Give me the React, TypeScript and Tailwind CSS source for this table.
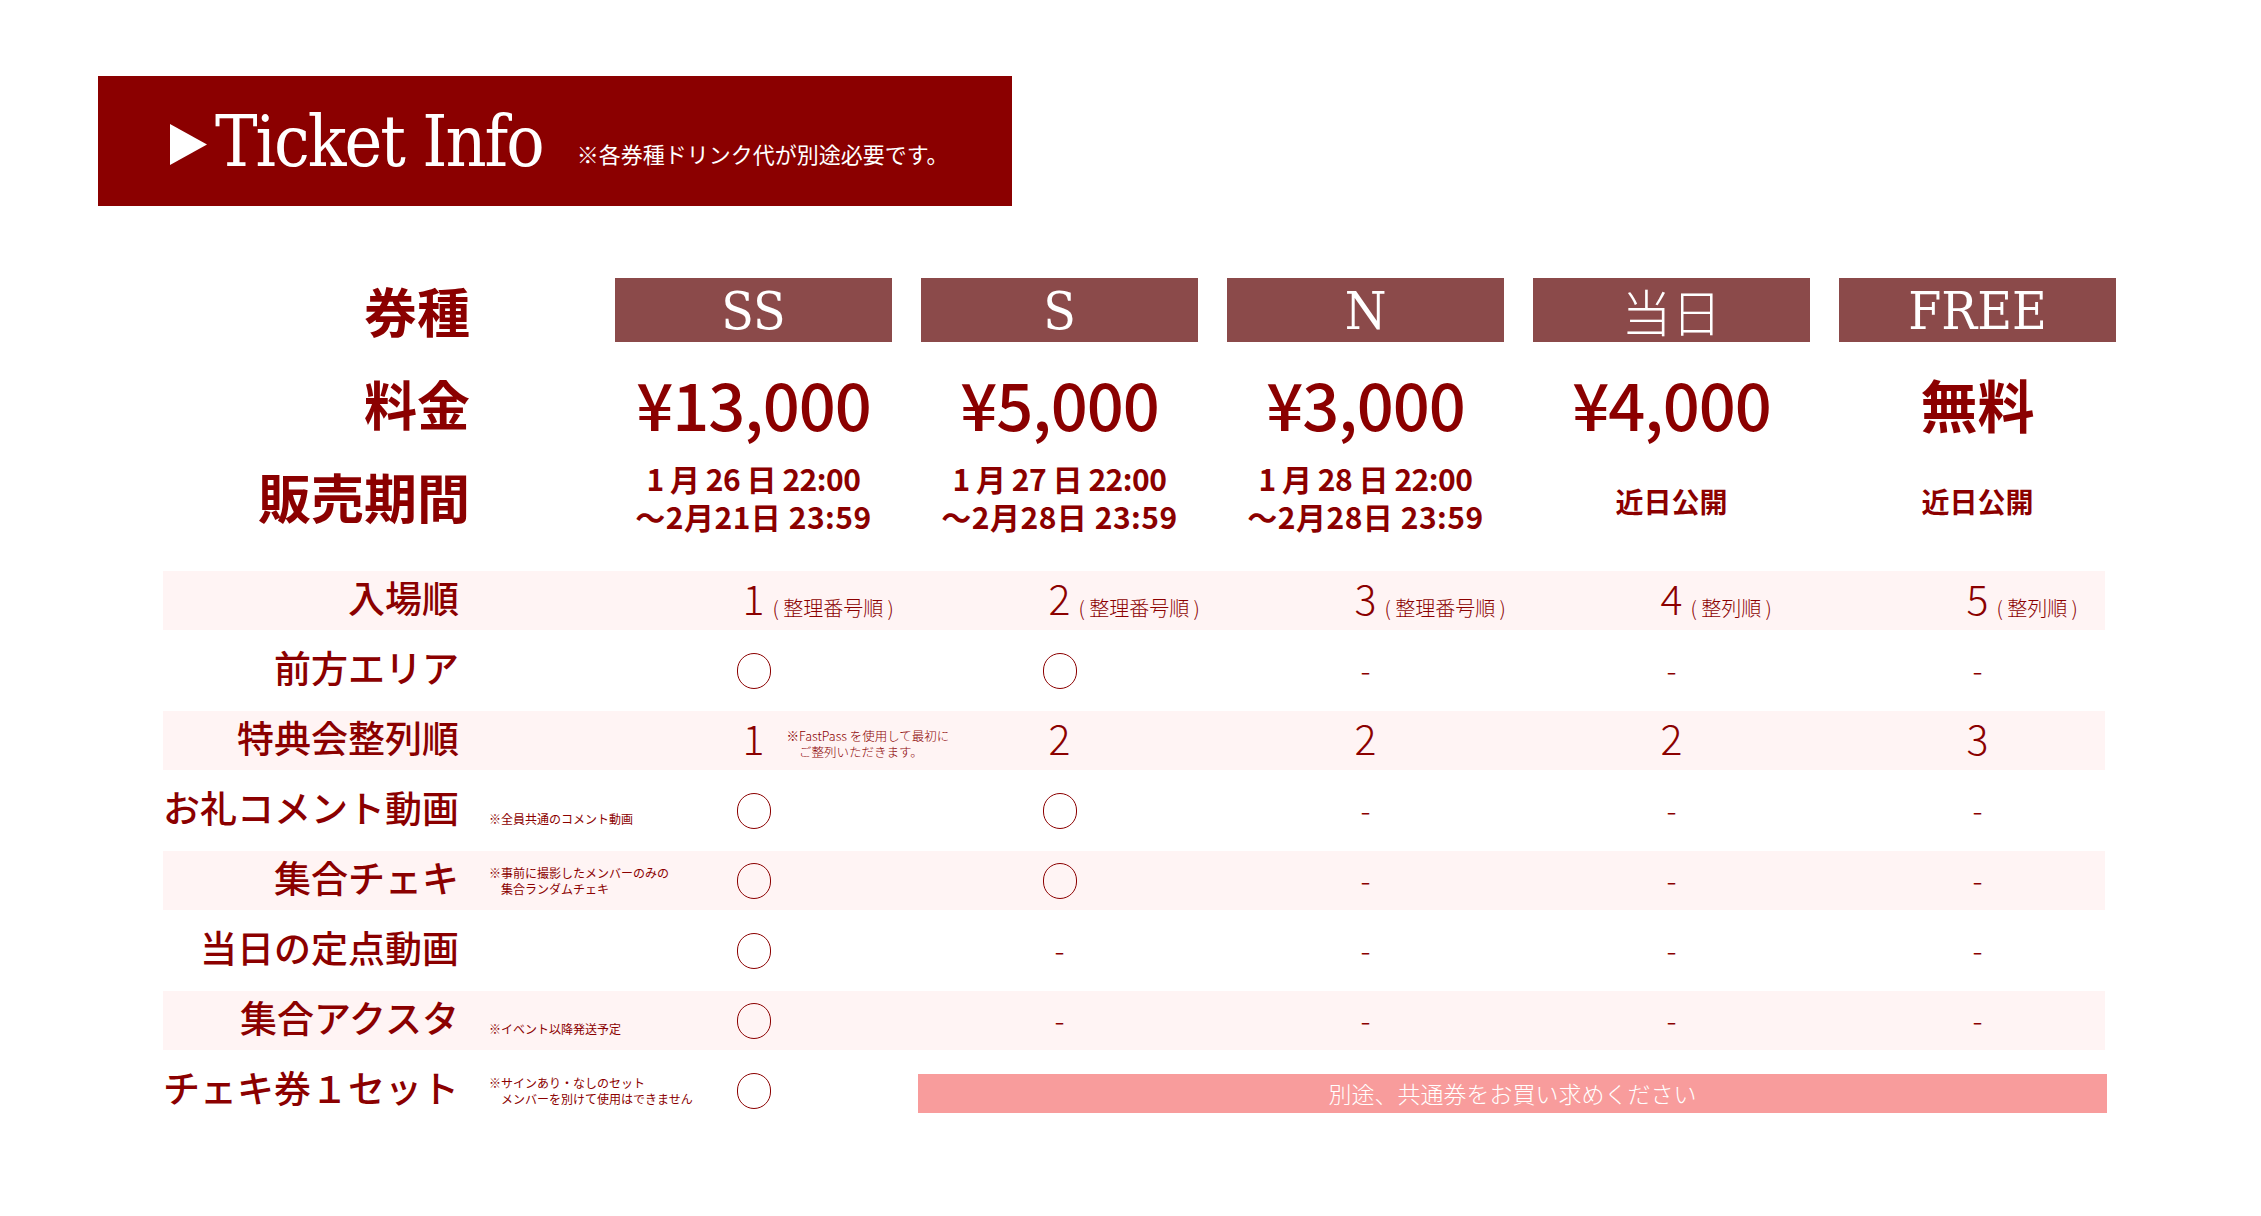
import React from "react";

const jp = "font-['Noto_Sans_CJK_JP','Noto_Sans',sans-serif]";
const slab = "font-['DejaVu_Serif_Condensed','DejaVu_Serif',serif]";

const grid = "grid grid-cols-[423px_repeat(5,277px)] gap-x-[29px]";

type Cell =
  | { t: "num"; v: string; note?: string; small?: string[] }
  | { t: "o" }
  | { t: "-" }
  | { t: "banner" };

type Row = { label: string; note?: string[]; cells: Cell[]; pink: boolean };

const O: Cell = { t: "o" };
const D: Cell = { t: "-" };

const rows: Row[] = [
  {
    label: "入場順",
    pink: true,
    cells: [
      { t: "num", v: "1", note: "( 整理番号順 )" },
      { t: "num", v: "2", note: "( 整理番号順 )" },
      { t: "num", v: "3", note: "( 整理番号順 )" },
      { t: "num", v: "4", note: "( 整列順 )" },
      { t: "num", v: "5", note: "( 整列順 )" },
    ],
  },
  { label: "前方エリア", pink: false, cells: [O, O, D, D, D] },
  {
    label: "特典会整列順",
    pink: true,
    cells: [
      { t: "num", v: "1", small: ["※FastPass を使用して最初に", "　ご整列いただきます。"] },
      { t: "num", v: "2" },
      { t: "num", v: "2" },
      { t: "num", v: "2" },
      { t: "num", v: "3" },
    ],
  },
  { label: "お礼コメント動画", note: ["※全員共通のコメント動画"], pink: false, cells: [O, O, D, D, D] },
  {
    label: "集合チェキ",
    note: ["※事前に撮影したメンバーのみの", "　集合ランダムチェキ"],
    pink: true,
    cells: [O, O, D, D, D],
  },
  { label: "当日の定点動画", pink: false, cells: [O, D, D, D, D] },
  { label: "集合アクスタ", note: ["※イベント以降発送予定"], pink: true, cells: [O, D, D, D, D] },
  {
    label: "チェキ券１セット",
    note: ["※サインあり・なしのセット", "　メンバーを別けて使用はできません"],
    pink: false,
    cells: [O, { t: "banner" }],
  },
];

function CellView({ c }: { c: Cell }) {
  if (c.t === "o")
    return (
      <div className="flex items-center justify-center">
        <div className="w-[34px] h-[36px] rounded-full border-[1.5px] border-[#8b0000]" />
      </div>
    );
  if (c.t === "-")
    return (
      <div className={`flex items-center justify-center text-[#8b0000] text-[30px] leading-none font-light ${jp}`}>
        <span className="mb-[4px]">-</span>
      </div>
    );
  if (c.t === "banner")
    return (
      <div className="col-span-4 flex items-center -ml-[3px] mr-[9px]">
        <div className={`w-full h-[39px] mt-[6px] bg-[#f89c9c] flex items-center justify-center text-white text-[23px] leading-none font-light ${jp}`}>
          別途、共通券をお買い求めください
        </div>
      </div>
    );
  return (
    <div className="flex items-center justify-center">
      <span className={`relative mb-[6px] text-[#8b0000] text-[41px] leading-none font-light ${jp}`}>
        {c.v}
        {c.note && (
          <span className="absolute left-full bottom-[0px] ml-[8px] whitespace-nowrap text-[20px] leading-none">
            {c.note}
          </span>
        )}
        {c.small && (
          <span className="absolute left-full top-[11px] ml-[22px] whitespace-pre text-[12.5px] leading-[16px]">
            {c.small.join("\n")}
          </span>
        )}
      </span>
    </div>
  );
}

export default function App() {
  return (
    <div className={`w-[2261px] h-[1216px] bg-white relative overflow-hidden ${jp}`}>
      <div className="ml-[98px] mt-[76px] w-[914px] h-[130px] bg-[#8b0000] flex items-center pl-[72px]">
        <svg width="37" height="41" viewBox="0 0 37 41" className="mt-[6px]">
          <polygon points="0,0 37,20.5 0,41" fill="#fff" />
        </svg>
        <span className={`${slab} text-white text-[71px] leading-none ml-[8px] tracking-[-2px]`}>Ticket Info</span>
        <span className={`${jp} text-white text-[22px] leading-none ml-[34px] mt-[24px]`}>※各券種ドリンク代が別途必要です。</span>
      </div>

      <div className="ml-[163px] mt-[72px] w-[1953px]">
        <div className={`${grid} h-[64px]`}>
          <div className="flex items-center justify-end pr-[116px] text-[#8b0000] text-[53px] leading-none font-bold">券種</div>
          {["SS", "S", "N"].map((t) => (
            <div key={t} className={`bg-[#8b4a4a] flex items-center justify-center text-white text-[53px] leading-none ${slab}`}>
              {t}
            </div>
          ))}
          <div className={`bg-[#8b4a4a] flex items-center justify-center text-white text-[50px] leading-none font-light ${jp}`}>
            当日
          </div>
          <div className={`bg-[#8b4a4a] flex items-center justify-center text-white text-[53px] leading-none ${slab}`}>
            FREE
          </div>
        </div>

        <div className={`${grid} h-[100px] mt-[11px]`}>
          <div className="flex items-center justify-end pr-[116px] text-[#8b0000] text-[53px] leading-none font-bold">料金</div>
          {["¥13,000", "¥5,000", "¥3,000", "¥4,000"].map((p) => (
            <div key={p} className="flex items-center justify-center text-[#8b0000] text-[65px] leading-none font-medium tracking-[-1px]">
              {p}
            </div>
          ))}
          <div className="flex items-center justify-center text-[#8b0000] text-[57px] leading-none font-bold">無料</div>
        </div>

        <div className={`${grid} h-[82px] mt-[2px]`}>
          <div className="flex items-center justify-end pr-[116px] text-[#8b0000] text-[53px] leading-none font-bold">販売期間</div>
          {[
            ["1 月 26 日 22:00", "～2月21日 23:59"],
            ["1 月 27 日 22:00", "～2月28日 23:59"],
            ["1 月 28 日 22:00", "～2月28日 23:59"],
          ].map(([a, b]) => (
            <div key={a} className="flex flex-col items-center justify-center gap-[8px] pt-[2px] text-[#8b0000] text-[30px] font-bold leading-[30px]">
              <span className="tracking-[-0.5px]">{a}</span>
              <span className="tracking-[0.5px]">{b}</span>
            </div>
          ))}
          <div className="flex items-center justify-center text-[#8b0000] text-[28px] leading-none font-bold mt-[10px]">近日公開</div>
          <div className="flex items-center justify-center text-[#8b0000] text-[28px] leading-none font-bold mt-[10px]">近日公開</div>
        </div>

        <div className="mt-[34px] flex flex-col gap-[11px]">
          {rows.map((r) => (
            <div key={r.label} className={`${grid} w-[1942px] h-[59px] ${r.pink ? "bg-[#fff4f4]" : ""}`}>
              <div className="flex items-center">
                <div className="w-[296px] shrink-0 mb-[6px] text-right text-[#8b0000] text-[37px] font-medium leading-none whitespace-nowrap">
                  {r.label}
                </div>
                {r.note && (
                  <div
                    className={`ml-[30px] whitespace-pre text-[#8b0000] text-[12px] leading-[16px] ${
                      r.note.length === 1 ? "mt-[16px]" : "mt-[0px]"
                    }`}
                  >
                    {r.note.join("\n")}
                  </div>
                )}
              </div>
              {r.cells.map((c, i) => (
                <CellView key={i} c={c} />
              ))}
            </div>
          ))}
        </div>
      </div>
    </div>
  );
}
